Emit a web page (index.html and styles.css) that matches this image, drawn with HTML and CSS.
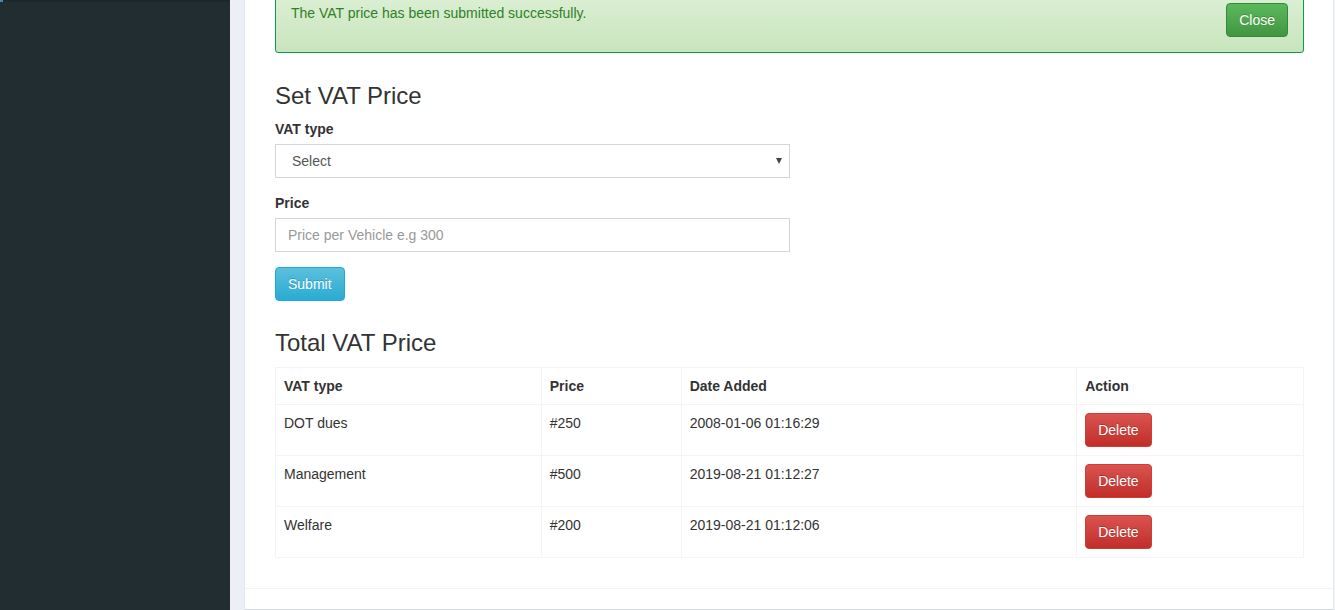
FILE: index.html
```html
<!DOCTYPE html>
<html>
<head>
<meta charset="utf-8">
<title>Set VAT Price</title>
<link rel="stylesheet" href="styles.css">
</head>
<body>
<div class="layout">
  <aside class="sidebar">
    <div class="sidebar-item"></div>
  </aside>
  <main class="content">
    <section class="box">
      <div class="box-body">
        <div class="alert">
          <span class="alert-text">The VAT price has been submitted successfully.</span>
          <button class="btn btn-success">Close</button>
        </div>

        <form class="vat-form">
          <h3 class="title">Set VAT Price</h3>
          <div class="form-group">
            <label class="label">VAT type</label>
            <div class="select-wrap">
              <select class="control select">
                <option>Select</option>
                <option>DOT dues</option>
                <option>Management</option>
                <option>Welfare</option>
              </select>
            </div>
          </div>
          <div class="form-group">
            <label class="label">Price</label>
            <input class="control input" type="text" placeholder="Price per Vehicle e.g 300">
          </div>
          <button type="button" class="btn btn-info">Submit</button>
        </form>

        <h3 class="title title-table">Total VAT Price</h3>
        <table class="table">
          <thead>
            <tr>
              <th class="c1">VAT type</th>
              <th class="c2">Price</th>
              <th class="c3">Date Added</th>
              <th class="c4">Action</th>
            </tr>
          </thead>
          <tbody>
            <tr>
              <td>DOT dues</td>
              <td>#250</td>
              <td>2008-01-06 01:16:29</td>
              <td><button class="btn btn-danger">Delete</button></td>
            </tr>
            <tr>
              <td>Management</td>
              <td>#500</td>
              <td>2019-08-21 01:12:27</td>
              <td><button class="btn btn-danger">Delete</button></td>
            </tr>
            <tr>
              <td>Welfare</td>
              <td>#200</td>
              <td>2019-08-21 01:12:06</td>
              <td><button class="btn btn-danger">Delete</button></td>
            </tr>
          </tbody>
        </table>
      </div>
      <div class="box-footer"></div>
    </section>
  </main>
</div>
</body>
</html>
```

FILE: styles.css
```css
* { box-sizing: border-box; }

html, body {
  margin: 0;
  padding: 0;
  height: 610px;
  overflow: hidden;
  background: #ecf0f5;
  font-family: "Liberation Sans", Arial, Helvetica, sans-serif;
  font-size: 14px;
  line-height: 20px;
  color: #333;
}

.layout {
  display: flex;
  height: 610px;
}

.sidebar {
  width: 230px;
  flex: 0 0 230px;
  background: #222d32;
}

.sidebar-item {
  height: 2px;
  background: #1e282c;
  border-left: 3px solid #3c8dbc;
}

.content {
  flex: 1;
  padding: 0 2px 0 15px;
}

.box {
  background: #fff;
  margin-top: -13px;
  box-shadow: 0 1px 1px rgba(0, 0, 0, 0.12);
  border-bottom: 1px solid #d2d6de;
}

.box-body {
  padding: 0 29px 10px 30px;
}

.alert {
  display: flex;
  justify-content: space-between;
  align-items: flex-start;
  padding: 15px;
  border: 1px solid #0e9a4e;
  border-radius: 3px;
  background: linear-gradient(to bottom, #dff0d8 0%, #c8e5bc 100%);
  color: #2f8126;
}

.btn {
  display: inline-block;
  height: 34px;
  padding: 6px 12px;
  font-family: "Liberation Sans", Arial, Helvetica, sans-serif;
  font-size: 14px;
  line-height: 20px;
  border-radius: 4px;
  border: 1px solid transparent;
  color: #fff;
  cursor: pointer;
  text-shadow: 0 -1px 0 rgba(0, 0, 0, 0.2);
}

.btn-success {
  background: linear-gradient(to bottom, #5cb85c 0%, #419641 100%);
  border-color: #2f8a3e;
}

.btn-info {
  background: linear-gradient(to bottom, #5bc0de 0%, #2aabd2 100%);
  border-color: #1eaad5;
}

.btn-danger {
  background: linear-gradient(to bottom, #d9534f 0%, #c12e2a 100%);
  border-color: #d03c36;
}

.vat-form {
  width: 515px;
}

.title {
  margin: 30px 0 10px;
  font-size: 24px;
  font-weight: 500;
  line-height: 26.4px;
  color: #333;
}

.title-table {
  margin-top: 29px;
}

.form-group {
  margin-bottom: 15px;
}

.label {
  display: block;
  margin-bottom: 5px;
  font-weight: 700;
}

.control {
  display: block;
  width: 100%;
  height: 34px;
  padding: 6px 12px;
  border: 1px solid #d2d6de;
  border-radius: 0;
  background: #fff;
  font-family: "Liberation Sans", Arial, Helvetica, sans-serif;
  font-size: 14px;
  color: #555;
  outline: none;
}

.select-wrap {
  position: relative;
}

.select {
  appearance: none;
  -webkit-appearance: none;
  padding-left: 16px;
}

.select-wrap::after {
  content: "";
  position: absolute;
  right: 8px;
  top: 14px;
  border-left: 3.5px solid transparent;
  border-right: 3.5px solid transparent;
  border-top: 6px solid #444;
}

.input::placeholder {
  color: #999;
}

.table {
  width: 100%;
  border-collapse: collapse;
  margin-bottom: 20px;
}

.table th,
.table td {
  border: 1px solid #f4f4f4;
  padding: 8px;
  text-align: left;
  vertical-align: top;
  line-height: 20px;
}

.table th {
  font-weight: 700;
}

.c1 { width: 266px; }
.c2 { width: 140px; }
.c3 { width: 396px; }
.c4 { width: 227px; }

.box-footer {
  height: 21px;
  border-top: 1px solid #f4f4f4;
}
```
